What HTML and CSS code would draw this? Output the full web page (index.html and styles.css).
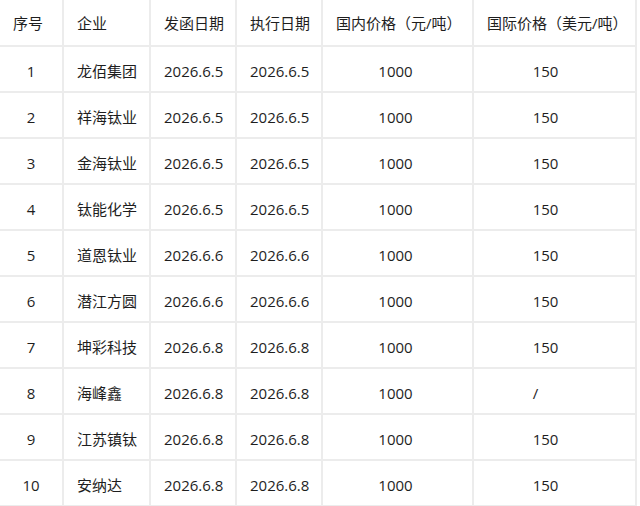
FILE: index.html
```html
<!DOCTYPE html>
<html lang="zh">
<head>
<meta charset="utf-8">
<link rel="stylesheet" href="styles.css">
</head>
<body>
<table class="price-table">
  <colgroup>
    <col class="c-no"><col class="c-co"><col class="c-d1"><col class="c-d2"><col class="c-p1"><col class="c-p2">
  </colgroup>
  <thead>
    <tr><th>序号</th><th>企业</th><th>发函日期</th><th>执行日期</th><th>国内价格（元/吨）</th><th>国际价格（美元/吨）</th></tr>
  </thead>
  <tbody>
    <tr><td class="num">1</td><td>龙佰集团</td><td>2026.6.5</td><td>2026.6.5</td><td class="dom">1000</td><td class="intl">150</td></tr>
    <tr><td class="num">2</td><td>祥海钛业</td><td>2026.6.5</td><td>2026.6.5</td><td class="dom">1000</td><td class="intl">150</td></tr>
    <tr><td class="num">3</td><td>金海钛业</td><td>2026.6.5</td><td>2026.6.5</td><td class="dom">1000</td><td class="intl">150</td></tr>
    <tr><td class="num">4</td><td>钛能化学</td><td>2026.6.5</td><td>2026.6.5</td><td class="dom">1000</td><td class="intl">150</td></tr>
    <tr><td class="num">5</td><td>道恩钛业</td><td>2026.6.6</td><td>2026.6.6</td><td class="dom">1000</td><td class="intl">150</td></tr>
    <tr><td class="num">6</td><td>潜江方圆</td><td>2026.6.6</td><td>2026.6.6</td><td class="dom">1000</td><td class="intl">150</td></tr>
    <tr><td class="num">7</td><td>坤彩科技</td><td>2026.6.8</td><td>2026.6.8</td><td class="dom">1000</td><td class="intl">150</td></tr>
    <tr><td class="num">8</td><td>海峰鑫</td><td>2026.6.8</td><td>2026.6.8</td><td class="dom">1000</td><td class="intl slash">/</td></tr>
    <tr><td class="num">9</td><td>江苏镇钛</td><td>2026.6.8</td><td>2026.6.8</td><td class="dom">1000</td><td class="intl">150</td></tr>
    <tr><td class="num">10</td><td>安纳达</td><td>2026.6.8</td><td>2026.6.8</td><td class="dom">1000</td><td class="intl">150</td></tr>
  </tbody>
</table>
</body>
</html>
```

FILE: styles.css
```css
html, body {
  margin: 0;
  padding: 0;
  background: #ffffff;
}

.price-table {
  border-collapse: collapse;
  table-layout: fixed;
  width: 636px;
  font-family: "Open Sans", "Noto Sans CJK SC", sans-serif;
  font-size: 15px;
  color: #1e1e1e;
}

.c-no { width: 63px; }
.c-co { width: 87px; }
.c-d1 { width: 86px; }
.c-d2 { width: 86px; }
.c-p1 { width: 151px; }
.c-p2 { width: 163px; }

.price-table th,
.price-table td {
  box-sizing: border-box;
  height: 46px;
  padding: 0 0 0 13px;
  border-right: 2px solid #ececec;
  border-bottom: 2px solid #ececec;
  text-align: left;
  font-weight: normal;
  white-space: nowrap;
  vertical-align: middle;
}

.price-table td {
  padding-top: 3px;
}

.price-table td.num {
  text-align: center;
  padding-left: 0;
}

.price-table td.dom {
  text-align: center;
  padding-left: 0;
  padding-right: 4px;
}

.price-table td.intl {
  text-align: center;
  padding-left: 0;
  padding-right: 18px;
}

.price-table td.slash {
  padding-right: 38px;
}
```
